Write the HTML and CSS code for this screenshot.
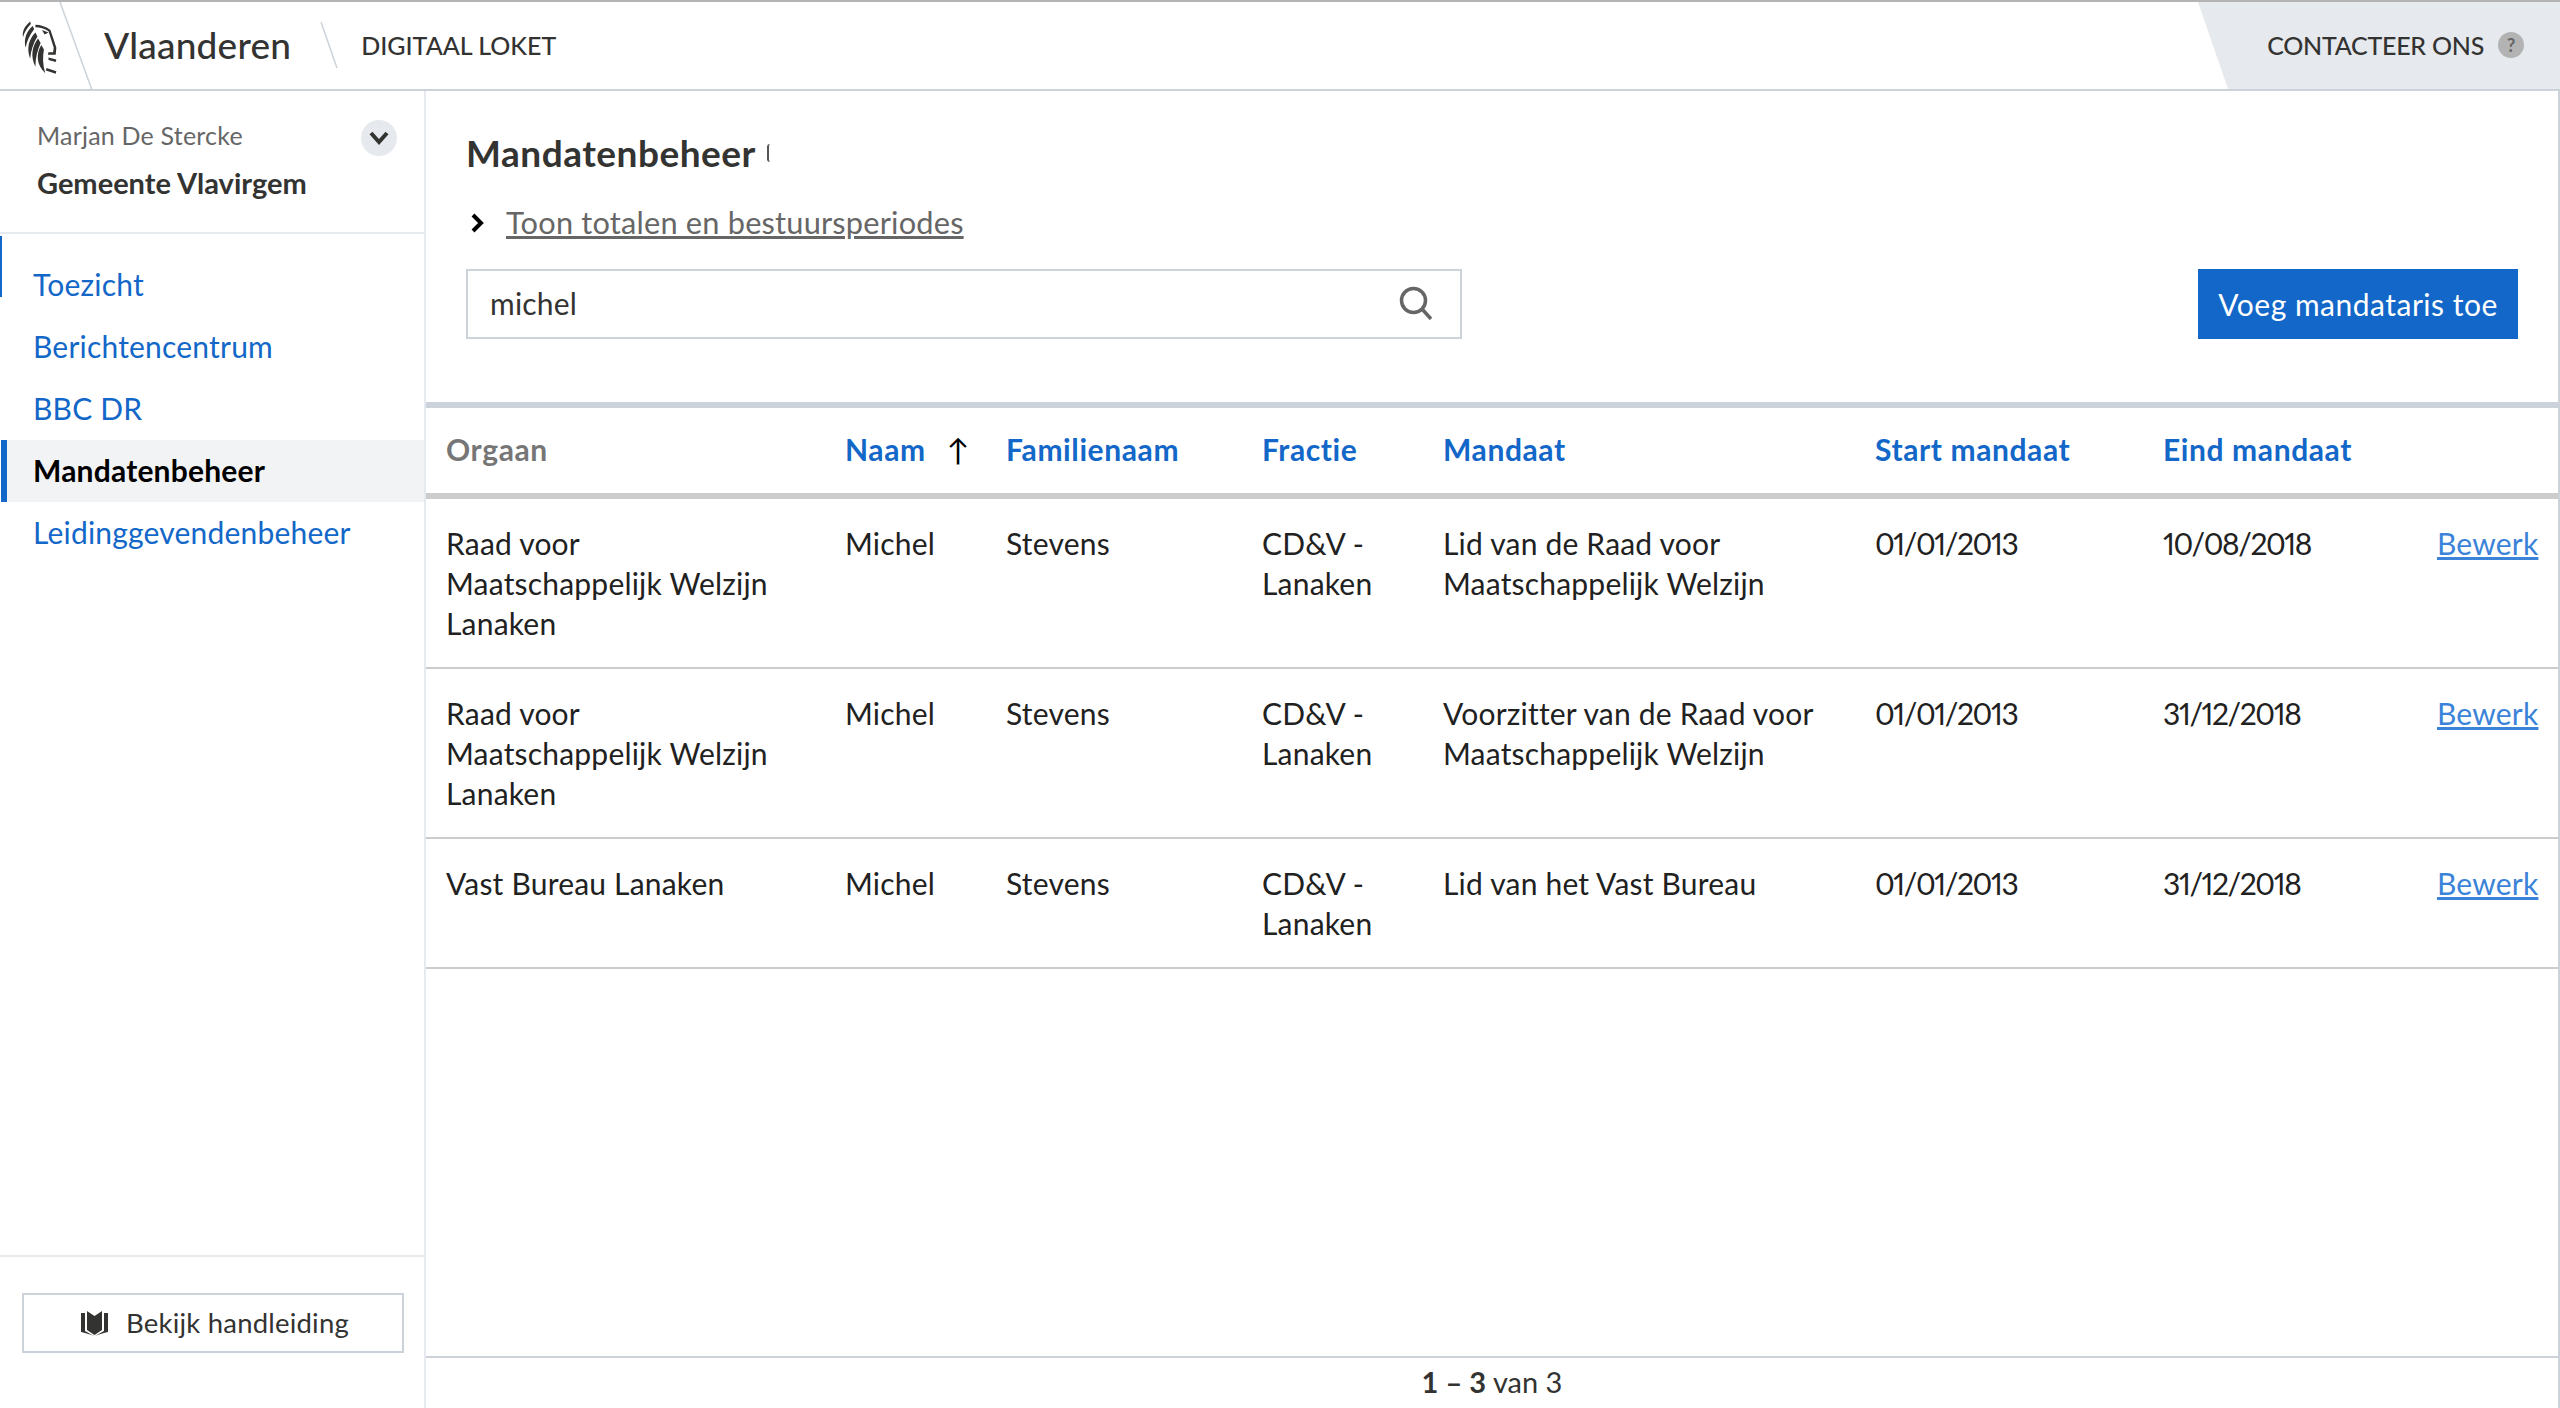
FILE: index.html
```html
<!DOCTYPE html>
<html lang="nl">
<head>
  <meta charset="UTF-8" />
  <title>Mandatenbeheer</title>
  <link rel="stylesheet" href="styles.css">
</head>
<body>
  <header class="topbar">
    <svg class="lion" viewBox="35 25 110 170" width="36" height="56">
      <g fill="#333332">
        <path d="M60 32C44 46 35 60 38 80C42 66 52 50 62 40z"/>
        <path d="M68 46C48 62 40 86 46 112C50 90 60 72 72 56z"/>
        <path d="M76 66C56 86 48 114 60 146C62 120 70 98 82 78z"/>
        <path d="M84 84C66 108 60 138 76 170C76 144 82 120 92 98z"/>
        <path d="M94 104C78 130 78 164 106 190C98 164 98 140 102 118z"/>
        <path d="M76 42C92 42 110 48 122 58C128 76 134 94 140 112L138 134L114 134L116 126L130 126L132 112L116 62C104 54 90 50 76 50z"/>
        <path d="M116 142L140 148L138 156L116 150zM110 174L140 184L138 192L108 182z"/>
        <path d="M96 58L116 66L104 72z"/>
      </g>
    </svg>
    <svg class="slash slash-logo" viewBox="0 0 34 88" width="34" height="88"><path d="M1 0L33 88" stroke="#cbd2da" stroke-width="1.500"/></svg>
    <div class="brand">Vlaanderen</div>
    <svg class="slash slash-app" viewBox="0 0 18 46" width="18" height="46"><path d="M1 0L17 46" stroke="#cbd2da" stroke-width="1.500"/></svg>
    <div class="app-name">DIGITAAL LOKET</div>
    <a class="contact">CONTACTEER ONS <span class="help">?</span></a>
  </header>

  <div class="main">
    <aside class="sidebar">
      <div class="user">
        <div class="user-text">
          <div class="user-name">Marjan De Stercke</div>
          <div class="user-org">Gemeente Vlavirgem</div>
        </div>
        <span class="user-toggle">
          <svg viewBox="0 0 20 14" width="20" height="14"><path d="M2 2l8 9 8-9" fill="none" stroke="#333332" stroke-width="4"/></svg>
        </span>
      </div>
      <nav class="nav">
        <a class="nav-item">Toezicht</a>
        <a class="nav-item">Berichtencentrum</a>
        <a class="nav-item">BBC DR</a>
        <a class="nav-item active">Mandatenbeheer</a>
        <a class="nav-item">Leidinggevendenbeheer</a>
      </nav>
      <div class="manual">
        <a class="manual-btn">
          <svg viewBox="0 0 27 26" width="27" height="26"><path d="M6 1l7.500 5L21 1v19l-7.500 5L6 20zM0 3h4v18l9 5C9 24 4 23 0 22zM27 3h-4v18l-9 5c4-2 9-3 13-4z" fill="#333332"/></svg>
          Bekijk handleiding
        </a>
      </div>
    </aside>

    <section class="content">
      <div class="page-head">
        <h1>Mandatenbeheer<span class="spinner"></span></h1>
        <div class="toggle">
          <svg viewBox="0 0 14 20" width="14" height="20"><path d="M2 2l8 8-8 8" fill="none" stroke="#000" stroke-width="4"/></svg>
          <a class="toggle-link">Toon totalen en bestuursperiodes</a>
        </div>
        <div class="tools">
          <div class="search">
            <span>michel</span>
            <svg viewBox="0 0 34 34" width="34" height="34"><circle cx="14.500" cy="14.500" r="12" fill="none" stroke="#666" stroke-width="3.500"/><path d="M23 23l9 10" stroke="#666" stroke-width="3.500"/></svg>
          </div>
          <a class="add-btn">Voeg mandataris toe</a>
        </div>
      </div>

      <table class="data-table">
        <thead>
          <tr>
            <th class="col-organ">Orgaan</th>
            <th class="col-name"><a>Naam</a><span class="sort">↑</span></th>
            <th class="col-family"><a>Familienaam</a></th>
            <th class="col-fraction"><a>Fractie</a></th>
            <th class="col-mandate"><a>Mandaat</a></th>
            <th class="col-start"><a>Start mandaat</a></th>
            <th class="col-end"><a>Eind mandaat</a></th>
            <th></th>
          </tr>
        </thead>
        <tbody>
          <tr>
            <td>Raad voor<br>Maatschappelijk Welzijn<br>Lanaken</td>
            <td>Michel</td>
            <td>Stevens</td>
            <td>CD&amp;V -<br>Lanaken</td>
            <td>Lid van de Raad voor<br>Maatschappelijk Welzijn</td>
            <td class="date">01/01/2013</td>
            <td class="date">10/08/2018</td>
            <td><a class="edit">Bewerk</a></td>
          </tr>
          <tr>
            <td>Raad voor<br>Maatschappelijk Welzijn<br>Lanaken</td>
            <td>Michel</td>
            <td>Stevens</td>
            <td>CD&amp;V -<br>Lanaken</td>
            <td>Voorzitter van de Raad voor<br>Maatschappelijk Welzijn</td>
            <td class="date">01/01/2013</td>
            <td class="date">31/12/2018</td>
            <td><a class="edit">Bewerk</a></td>
          </tr>
          <tr>
            <td>Vast Bureau Lanaken</td>
            <td>Michel</td>
            <td>Stevens</td>
            <td>CD&amp;V -<br>Lanaken</td>
            <td>Lid van het Vast Bureau</td>
            <td class="date">01/01/2013</td>
            <td class="date">31/12/2018</td>
            <td><a class="edit">Bewerk</a></td>
          </tr>
        </tbody>
      </table>

      <div class="pager"><b>1 – 3</b> van 3</div>
    </section>
  </div>
</body>
</html>
```

FILE: styles.css
```css
* {
  box-sizing: border-box;
}

html,
body {
  height: 100%;
}

body {
  margin: 0;
  display: flex;
  flex-direction: column;
  font-family: "Lato", sans-serif;
  font-size: 30px;
  line-height: 40px;
  letter-spacing: 0.2px;
  color: #333332;
  background: #fff;
  border-top: 2px solid #b4b4b4;
}

a {
  color: #1267c8;
}

/* top bar */
.topbar {
  flex: 0 0 89px;
  display: flex;
  align-items: center;
  position: relative;
  border-bottom: 2px solid #cbd2da;
}

.lion {
  margin-left: 22px;
  margin-top: 2px;
}

.slash {
  position: absolute;
}

.slash-logo {
  left: 59px;
  top: 0;
}

.slash-app {
  left: 320px;
  top: 20px;
}

.brand {
  margin-left: 46px;
  margin-top: -2px;
  font-size: 37px;
  font-weight: 500;
}

.app-name {
  margin-left: 70px;
  margin-top: -2px;
  font-size: 25px;
  font-weight: 500;
  letter-spacing: 0;
}

.contact {
  margin-left: auto;
  width: 362px;
  height: 100%;
  padding: 0 36px 2px 0;
  display: flex;
  align-items: center;
  justify-content: flex-end;
  gap: 14px;
  font-size: 25px;
  font-weight: 500;
  letter-spacing: -0.25px;
  color: #333332;
  background: #e6e9ed;
  clip-path: polygon(0 0, 100% 0, 100% 100%, 30px 100%);
}

.help {
  width: 26px;
  height: 26px;
  border-radius: 50%;
  background: #b3b3b3;
  color: #666;
  font-size: 18px;
  font-weight: 700;
  line-height: 26px;
  text-align: center;
}

/* page body */
.main {
  flex: 1;
  display: flex;
  min-height: 0;
}

.sidebar {
  flex: 0 0 426px;
  display: flex;
  flex-direction: column;
  border-right: 2px solid #e6e9ed;
}

.user {
  height: 143px;
  padding: 24px 27px 0 37px;
  display: flex;
  justify-content: space-between;
  border-bottom: 2px solid #e6e9ed;
}

.user-name {
  font-size: 25px;
  color: #666;
}

.user-org {
  margin-top: 8px;
  font-size: 29px;
  font-weight: 700;
  letter-spacing: 0;
}

.user-toggle {
  width: 36px;
  height: 36px;
  margin-top: 5px;
  border-radius: 50%;
  background: #e6e9ed;
  display: flex;
  align-items: center;
  justify-content: center;
}

.nav {
  flex: 1;
  padding-top: 20px;
  position: relative;
}

/* thin marker above the first item */
.nav::before {
  content: "";
  position: absolute;
  left: 0;
  top: 2px;
  width: 2px;
  height: 61px;
  background: #1267c8;
}

.nav-item {
  display: block;
  height: 62px;
  padding: 0 0 2px 33px;
  line-height: 60px;
}

.nav-item.active {
  margin-left: 1px;
  padding-left: 26px;
  font-weight: 700;
  color: #000;
  background: #f2f3f5;
  border-left: 6px solid #1267c8;
}

.manual {
  height: 153px;
  padding: 36px 20px 0 22px;
  border-top: 2px solid #e6e9ed;
}

.manual-btn {
  height: 60px;
  padding-left: 4px;
  display: flex;
  align-items: center;
  justify-content: center;
  gap: 18px;
  font-size: 27.500px;
  color: #333332;
  border: 2px solid #cbd2da;
}

/* content */
.content {
  flex: 1;
  min-width: 0;
  display: flex;
  flex-direction: column;
  border-right: 2px solid #cbd2da;
}

.page-head {
  height: 311px;
  padding: 37px 40px 0 40px;
  flex: none;
}

h1 {
  margin: 0;
  display: flex;
  align-items: center;
  font-size: 37px;
  line-height: 50px;
  font-weight: 700;
  letter-spacing: 0.5px;
}

.spinner {
  width: 3px;
  height: 18px;
  margin-left: 11px;
  border-left: 2px solid #555;
  border-radius: 3px 0 0 3px;
}

.toggle {
  margin-top: 25px;
  display: flex;
  align-items: center;
  gap: 21px;
  padding-left: 5px;
}

.toggle-link {
  color: #666;
  font-size: 30.750px;
  text-decoration: underline;
}

.tools {
  margin-top: 26px;
  display: flex;
  justify-content: space-between;
  align-items: flex-start;
}

.search {
  width: 996px;
  height: 70px;
  padding: 0 27px 2px 22px;
  display: flex;
  align-items: center;
  justify-content: space-between;
  border: 2px solid #cbd2da;
}

.add-btn {
  width: 320px;
  height: 70px;
  line-height: 70px;
  text-align: center;
  letter-spacing: 0.5px;
  color: #fff;
  background: #1267c8;
}

/* table */
.data-table {
  width: 100%;
  border-collapse: collapse;
  table-layout: fixed;
  flex: none;
  border-top: 6px solid #cbd2da;
}

.data-table th {
  height: 91px;
  padding: 0 0 3px 20px;
  text-align: left;
  font-weight: 700;
  letter-spacing: 0.6px;
  color: #767676;
  border-bottom: 6px solid #cccccc;
}

.data-table th a {
  text-decoration: none;
}

.data-table td {
  padding: 24px 0 24px 20px;
  vertical-align: top;
  border-bottom: 2px solid #cccccc;
  color: #212121;
}

.data-table td.date {
  font-variant-numeric: proportional-nums;
  letter-spacing: -1.400px;
}

.sort {
  margin-left: 21px;
  color: #000;
  font-weight: 400;
}

.col-organ { width: 399px; }
.col-name { width: 161px; }
.col-family { width: 256px; }
.col-fraction { width: 181px; }
.col-mandate { width: 432px; }
.col-start { width: 288px; }
.col-end { width: 274px; }

.edit {
  color: #3b83d8;
  text-decoration: underline;
}

.pager {
  margin-top: auto;
  height: 52px;
  padding-top: 4px;
  font-size: 29px;
  letter-spacing: 0;
  text-align: center;
  border-top: 2px solid #cbd2da;
}
```
